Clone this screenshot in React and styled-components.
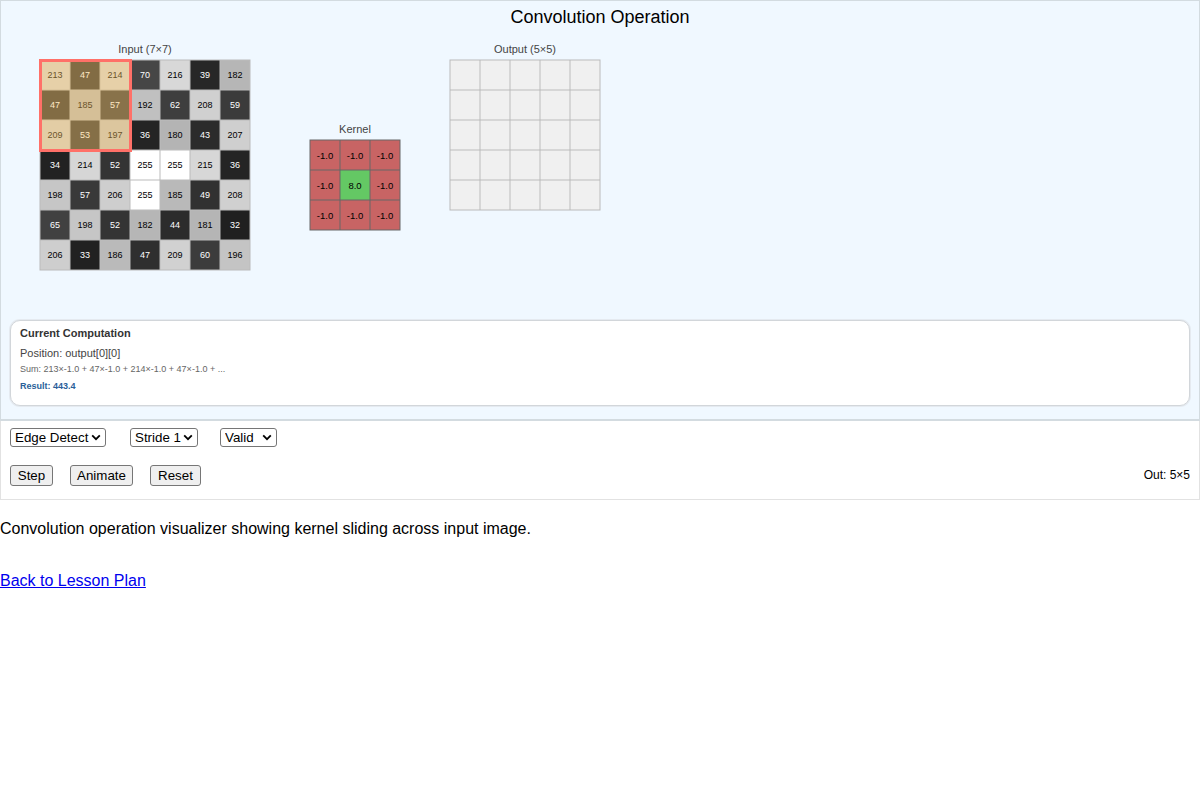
import React from "react";
import styled, { createGlobalStyle } from "styled-components";

const Global = createGlobalStyle`
  html, body { margin: 0; padding: 0; background: #fff; }
  body { font-family: "Liberation Sans", Arial, sans-serif; color: #000; }
`;

const CELL = 30;
const CHEVRON =
  "data:image/svg+xml;utf8," +
  encodeURIComponent(
    '<svg xmlns="http://www.w3.org/2000/svg" width="10" height="7" viewBox="0 0 10 7"><path d="M1.2 1.4 L5 5.2 L8.8 1.4" fill="none" stroke="#000" stroke-width="1.8"/></svg>'
  );

const Page = styled.div`
  width: 1200px;
`;

const Canvas = styled.section`
  box-sizing: border-box;
  width: 1200px;
  height: 421px;
  background: #f0f8ff;
  border: 1px solid #d3dbe0;
  border-bottom-width: 2px;
  padding: 0 9px;
  display: flex;
  flex-direction: column;
`;

const Title = styled.h1`
  margin: 0;
  height: 34px;
  line-height: 33px;
  font-size: 18px;
  font-weight: 400;
  text-align: center;
`;

const Stage = styled.div`
  display: flex;
  align-items: flex-start;
  height: 285px;
  padding-left: 30px;
`;

const GridBlock = styled.div`
  position: relative;
  display: flex;
  flex-direction: column;
  align-items: center;
  margin-top: ${(p) => p.$top}px;
  margin-left: ${(p) => p.$left}px;
`;

const GridLabel = styled.div`
  height: 17px;
  line-height: 12px;
  font-size: 11px;
  color: #444;
`;

const Matrix = styled.div`
  display: grid;
  grid-template-columns: repeat(${(p) => p.$n}, ${CELL}px);
  grid-auto-rows: ${CELL}px;
  box-shadow: 0 0 0 0.5px ${(p) => p.$line};
`;

const Cell = styled.div`
  display: flex;
  align-items: center;
  justify-content: center;
  font-family: "Liberation Sans", Arial, sans-serif;
  font-size: ${(p) => p.$size}px;
  color: ${(p) => p.$ink};
  background: ${(p) => p.$bg};
  box-shadow: inset 0 0 0 0.5px ${(p) => p.$line};
`;

const Window = styled.div`
  position: absolute;
  left: -1.5px;
  top: 15.5px;
  width: 93px;
  height: 93px;
  box-sizing: border-box;
  border: 3px solid #ff7068;
  background: rgba(255, 200, 100, 0.4);
  background-clip: padding-box;
`;

const Panel = styled.div`
  box-sizing: border-box;
  height: 86px;
  background: #fff;
  border: 1px solid #d2d6da;
  border-radius: 10px;
  box-shadow: 0 0 0 1px rgba(214, 218, 222, 0.45);
  padding: 6px 9px;
`;

const PanelTitle = styled.div`
  font-size: 11px;
  font-weight: 700;
  line-height: 13px;
  color: #333;
`;

const Position = styled.div`
  margin-top: 7px;
  font-size: 11px;
  line-height: 13px;
  color: #444;
`;

const SumLine = styled.div`
  margin-top: 4px;
  font-size: 9px;
  line-height: 11px;
  color: #666;
`;

const ResultLine = styled.div`
  margin-top: 6px;
  font-size: 9px;
  font-weight: 700;
  line-height: 11px;
  color: #2a6099;
`;

const Controls = styled.div`
  box-sizing: border-box;
  width: 1200px;
  height: 79px;
  background: #fff;
  border: 1px solid #e2e2e2;
  border-top: 0;
  padding: 6px 9px 0;
`;

const SelectRow = styled.div`
  display: flex;
  align-items: center;
  height: 20px;
  gap: 22px;
`;

const ButtonRow = styled.div`
  display: flex;
  align-items: center;
  height: 38px;
  margin-top: 9px;
  gap: 17px;
`;

const Select = styled.select`
  appearance: none;
  box-sizing: border-box;
  font-family: "Liberation Sans", Arial, sans-serif;
  font-size: 13.333px;
  height: 19px;
  width: ${(p) => p.$w}px;
  margin-right: ${(p) => p.$after || 0}px;
  padding: 0 0 0 4px;
  color: #000;
  border: 1px solid #767676;
  border-radius: 3px;
  background: #fff url("${CHEVRON}") no-repeat right 4px center;
`;

const Button = styled.button`
  font-family: "Liberation Sans", Arial, sans-serif;
  font-size: 13.333px;
  height: 21px;
  width: ${(p) => p.$w}px;
  padding: 0;
  background: #efefef;
  color: #000;
  border: 1px solid #767676;
  border-radius: 3px;
`;

const Spacer = styled.div`
  flex: 1;
`;

const OutLabel = styled.span`
  font-size: 12px;
`;

const Description = styled.p`
  margin: 0;
  padding-top: 20px;
  font-size: 16px;
  line-height: 18px;
`;

const LessonLink = styled.a`
  display: inline-block;
  margin-top: 34px;
  font-size: 16px;
  line-height: 18px;
  color: #0000ee;
`;

const input = [
  [213, 47, 214, 70, 216, 39, 182],
  [47, 185, 57, 192, 62, 208, 59],
  [209, 53, 197, 36, 180, 43, 207],
  [34, 214, 52, 255, 255, 215, 36],
  [198, 57, 206, 255, 185, 49, 208],
  [65, 198, 52, 182, 44, 181, 32],
  [206, 33, 186, 47, 209, 60, 196],
];
const kernel = [-1, -1, -1, -1, 8, -1, -1, -1, -1];

export default function App() {
  return (
    <Page>
      <Global />
      <Canvas>
        <Title>Convolution Operation</Title>
        <Stage>
          <GridBlock $top={8} $left={0}>
            <GridLabel>Input (7×7)</GridLabel>
            <Matrix $n={7} $line="#bbb">
              {input.flat().map((v, i) => (
                <Cell
                  key={i}
                  $size={9}
                  $line="#bbb"
                  $bg={`rgb(${v},${v},${v})`}
                  $ink={v < 128 ? "#fff" : "#000"}
                >
                  {v}
                </Cell>
              ))}
            </Matrix>
            <Window />
          </GridBlock>
          <GridBlock $top={88} $left={60}>
            <GridLabel>Kernel</GridLabel>
            <Matrix $n={3} $line="#666">
              {kernel.map((v, i) => (
                <Cell key={i} $size={9.5} $line="#666" $bg={v > 0 ? "#64c864" : "#c86464"} $ink="#000">
                  {v.toFixed(1)}
                </Cell>
              ))}
            </Matrix>
          </GridBlock>
          <GridBlock $top={8} $left={50}>
            <GridLabel>Output (5×5)</GridLabel>
            <Matrix $n={5} $line="#bbb">
              {Array.from({ length: 25 }, (_, i) => (
                <Cell key={i} $size={9} $line="#bbb" $bg="#f0f0f0" $ink="#000" />
              ))}
            </Matrix>
          </GridBlock>
        </Stage>
        <Panel>
          <PanelTitle>Current Computation</PanelTitle>
          <Position>Position: output[0][0]</Position>
          <SumLine>Sum: 213×-1.0 + 47×-1.0 + 214×-1.0 + 47×-1.0 + ...</SumLine>
          <ResultLine>Result: 443.4</ResultLine>
        </Panel>
      </Canvas>
      <Controls>
        <SelectRow>
          <Select $w={96} $after={2} defaultValue="edge">
            <option value="edge">Edge Detect</option>
          </Select>
          <Select $w={68} defaultValue="1">
            <option value="1">Stride 1</option>
          </Select>
          <Select $w={57} defaultValue="valid">
            <option value="valid">Valid</option>
          </Select>
        </SelectRow>
        <ButtonRow>
          <Button $w={43}>Step</Button>
          <Button $w={63}>Animate</Button>
          <Button $w={51}>Reset</Button>
          <Spacer />
          <OutLabel>Out: 5×5</OutLabel>
        </ButtonRow>
      </Controls>
      <Description>Convolution operation visualizer showing kernel sliding across input image.</Description>
      <LessonLink href="#">Back to Lesson Plan</LessonLink>
    </Page>
  );
}
